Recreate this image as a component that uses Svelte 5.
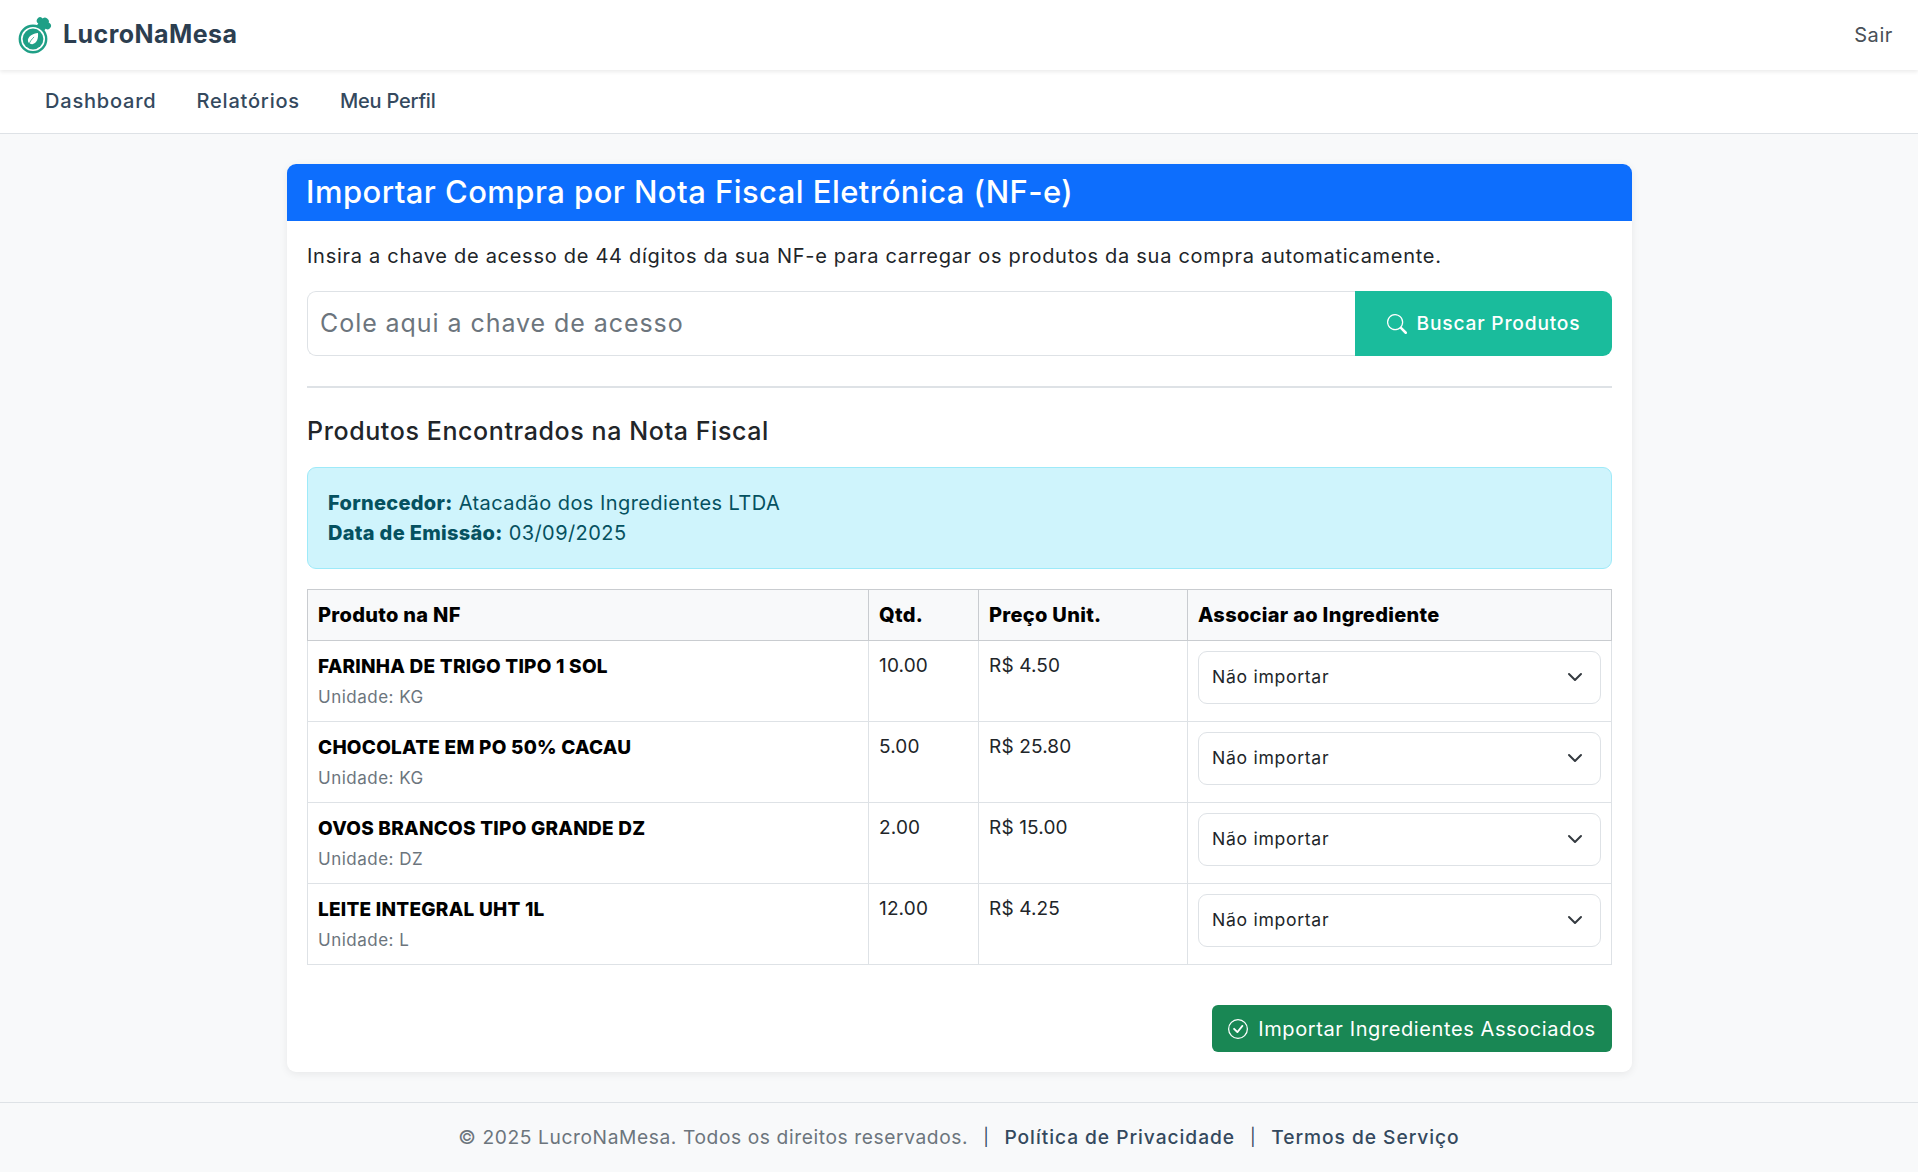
<script lang="ts">
  const produtos = [
    { nome: 'FARINHA DE TRIGO TIPO 1 SOL', unidade: 'KG', qtd: '10.00', preco: 'R$ 4.50' },
    { nome: 'CHOCOLATE EM PO 50% CACAU', unidade: 'KG', qtd: '5.00', preco: 'R$ 25.80' },
    { nome: 'OVOS BRANCOS TIPO GRANDE DZ', unidade: 'DZ', qtd: '2.00', preco: 'R$ 15.00' },
    { nome: 'LEITE INTEGRAL UHT 1L', unidade: 'L', qtd: '12.00', preco: 'R$ 4.25' }
  ]
</script>

<header class="topbar">
  <a class="brand" href="#top">
    <svg class="logo" viewBox="0 0 34 42" width="34" height="42" aria-hidden="true">
      <circle cx="15" cy="25" r="13.200" fill="none" stroke="#1f9f86" stroke-width="2.400" />
      <circle cx="15" cy="25" r="10.400" fill="#1f9f86" />
      <path d="M20 19c.5 5.500-1 9.800-5.600 11.200-2.700.2-4.700-1.400-4.500-4.100.3-4 4.900-6.500 10.100-7.100z" fill="#fff" />
      <path d="M10.500 31.500c1.200-3.600 3-6.300 5.600-8.500" fill="none" stroke="#1f9f86" stroke-width=".8" />
      <g transform="translate(-1 1.500) rotate(35 26 9)" fill="#1f9f86">
        <circle cx="21.500" cy="7.500" r="3.400" />
        <circle cx="26" cy="5.500" r="3.800" />
        <circle cx="30.500" cy="7.500" r="3.400" />
        <rect x="21.500" y="7.500" width="9" height="6" rx="1" />
      </g>
    </svg>
    <span>LucroNaMesa</span>
  </a>
  <a class="sair" href="#top">Sair</a>
</header>

<nav class="mainnav">
  <a href="#top">Dashboard</a>
  <a href="#top">Relatórios</a>
  <a href="#top">Meu Perfil</a>
</nav>

<main class="page">
  <section class="card">
    <h1 class="card-title">Importar Compra por Nota Fiscal Eletrónica (NF-e)</h1>
    <div class="card-body">
      <p class="intro">Insira a chave de acesso de 44 dígitos da sua NF-e para carregar os produtos da sua compra automaticamente.</p>

      <div class="search">
        <input type="text" placeholder="Cole aqui a chave de acesso" />
        <button type="button" class="btn-search">
          <svg viewBox="0 0 16 16" width="20" height="20" fill="currentColor" aria-hidden="true">
            <path d="M11.742 10.344a6.500 6.500 0 1 0-1.397 1.398h-.001c.03.04.062.078.098.115l3.850 3.850a1 1 0 0 0 1.415-1.414l-3.850-3.850a1.007 1.007 0 0 0-.115-.100zM12 6.500a5.500 5.500 0 1 1-11 0 5.500 5.500 0 0 1 11 0z" />
          </svg>
          Buscar Produtos
        </button>
      </div>

      <hr />

      <h2>Produtos Encontrados na Nota Fiscal</h2>

      <div class="alert">
        <div><strong>Fornecedor:</strong> Atacadão dos Ingredientes LTDA</div>
        <div><strong>Data de Emissão:</strong> 03/09/2025</div>
      </div>

      <table>
        <colgroup>
          <col class="c-prod" />
          <col class="c-qtd" />
          <col class="c-preco" />
          <col />
        </colgroup>
        <thead>
          <tr>
            <th>Produto na NF</th>
            <th>Qtd.</th>
            <th>Preço Unit.</th>
            <th>Associar ao Ingrediente</th>
          </tr>
        </thead>
        <tbody>
          {#each produtos as p}
            <tr>
              <td class="text">
                <div class="nome">{p.nome}</div>
                <div class="unidade">Unidade: {p.unidade}</div>
              </td>
              <td class="text">{p.qtd}</td>
              <td class="text">{p.preco}</td>
              <td>
                <div class="select-wrap">
                  <select>
                    <option>Não importar</option>
                  </select>
                  <svg viewBox="0 0 16 16" width="16" height="16" aria-hidden="true">
                    <path d="m2 5 6 6 6-6" fill="none" stroke="#343a40" stroke-width="2" stroke-linecap="round" stroke-linejoin="round" />
                  </svg>
                </div>
              </td>
            </tr>
          {/each}
        </tbody>
      </table>

      <div class="actions">
        <button type="button" class="btn-import">
          <svg viewBox="0 0 16 16" width="20" height="20" fill="currentColor" aria-hidden="true">
            <path d="M8 15A7 7 0 1 1 8 1a7 7 0 0 1 0 14zm0 1A8 8 0 1 0 8 0a8 8 0 0 0 0 16z" />
            <path d="M10.970 4.970a.235.235 0 0 0-.020.022L7.477 9.417 5.384 7.323a.750.750 0 0 0-1.060 1.060L6.970 11.030a.750.750 0 0 0 1.079-.020l3.992-4.990a.750.750 0 0 0-1.071-1.050z" />
          </svg>
          Importar Ingredientes Associados
        </button>
      </div>
    </div>
  </section>
</main>

<footer class="foot">
  <span>© 2025 LucroNaMesa. Todos os direitos reservados.</span>
  <span class="sep">|</span>
  <a href="#top">Política de Privacidade</a>
  <span class="sep">|</span>
  <a href="#top">Termos de Serviço</a>
</footer>

<style>
  :global(body) {
    margin: 0;
    background: #f8f9fa;
    color: #212529;
    font-family: Inter, 'Liberation Sans', sans-serif;
    font-size: 19px;
    line-height: 1.5;
  }

  a {
    text-decoration: none;
    color: inherit;
  }

  .topbar {
    height: 70px;
    display: flex;
    align-items: center;
    justify-content: space-between;
    padding: 0 25px 0 18px;
    background: #fff;
    box-shadow: 0 2px 4px rgba(0, 0, 0, 0.08);
    position: relative;
  }

  .brand {
    display: flex;
    align-items: center;
    gap: 11px;
    font-size: 25px;
    font-weight: 700;
    color: #2c3e50;
    letter-spacing: 0.45px;
  }

  .sair {
    font-size: 20px;
    letter-spacing: 0.6px;
    color: #495057;
  }

  .mainnav {
    height: 64px;
    padding-bottom: 2px;
    box-sizing: border-box;
    display: flex;
    align-items: center;
    gap: 40px;
    padding-left: 45px;
    background: #fff;
    border-bottom: 1px solid #dee2e6;
    font-size: 20px;
    letter-spacing: 0.8px;
    font-weight: 500;
    color: #34495e;
  }

  .mainnav a:last-child {
    letter-spacing: -0.2px;
  }

  .page {
    padding: 30px 0;
  }

  .card {
    width: 1345px;
    margin: 0 auto;
    background: #fff;
    border-radius: 9px;
    box-shadow: 0 2px 8px rgba(0, 0, 0, 0.07);
    overflow: hidden;
  }

  .card-title {
    margin: 0;
    height: 57px;
    padding: 0 19.500px;
    display: flex;
    align-items: center;
    background: #0d6efd;
    color: #fff;
    font-size: 31px;
    letter-spacing: 0.45px;
    font-weight: 500;
  }

  .card-body {
    padding: 21px 19.500px 20px 20.500px;
  }

  .intro {
    margin: 0 0 20px;
    font-size: 20px;
    letter-spacing: 0.72px;
    line-height: 29px;
  }

  .search {
    display: flex;
    height: 65px;
  }

  .search input {
    flex: 1;
    min-width: 0;
    padding: 0 12px;
    border: 1px solid #dee2e6;
    border-right: 0;
    border-radius: 9px 0 0 9px;
    font: inherit;
    font-size: 25px;
    letter-spacing: 0.94px;
    color: #212529;
    outline: none;
  }

  .search input::placeholder {
    color: #6c757d;
    opacity: 1;
  }

  .btn-search {
    width: 257px;
    display: flex;
    align-items: center;
    justify-content: center;
    gap: 10px;
    border: 0;
    border-radius: 0 9px 9px 0;
    background: #1abc9c;
    color: #fff;
    font: inherit;
    font-size: 19.200px;
    letter-spacing: 0.8px;
    font-weight: 500;
  }

  hr {
    margin: 30px 0 28px;
    border: 0;
    border-top: 2px solid #dee2e6;
  }

  h2 {
    margin: 0 0 21px;
    font-size: 25px;
    letter-spacing: 0.6px;
    font-weight: 500;
    line-height: 30px;
  }

  .alert {
    padding: 20px;
    border: 1px solid #9eeaf9;
    border-radius: 9px;
    background: #cff4fc;
    color: #055160;
    font-size: 20px;
    letter-spacing: 0.43px;
    line-height: 30px;
    margin-bottom: 20px;
  }

  .alert strong {
    font-weight: 800;
    letter-spacing: 0.3px;
  }

  table {
    width: 100%;
    border-collapse: collapse;
    table-layout: fixed;
    margin-bottom: 40px;
  }

  .c-prod {
    width: 561px;
  }

  .c-qtd {
    width: 110px;
  }

  .c-preco {
    width: 209px;
  }

  th,
  td {
    border: 1px solid #dee2e6;
    padding: 10px;
    vertical-align: top;
    text-align: left;
  }

  th {
    background: #f8f9fa;
    border-color: #c9ccd0;
    font-size: 20px;
    letter-spacing: 0.3px;
    font-weight: 800;
    color: #000;
    line-height: 30px;
  }

  td {
    height: 60px;
    color: #212529;
    letter-spacing: 0.15px;
  }

  td.text {
    padding: 11px 10px 9px;
  }

  .nome {
    font-weight: 800;
    color: #000;
    line-height: 30px;
    letter-spacing: 0.25px;
  }

  .unidade {
    font-size: 17px;
    letter-spacing: 0.5px;
    color: #6c757d;
    line-height: 30px;
  }

  .select-wrap {
    position: relative;
  }

  .select-wrap svg {
    position: absolute;
    right: 18px;
    top: 18px;
    pointer-events: none;
  }

  select {
    appearance: none;
    width: 100%;
    height: 53px;
    padding: 0 13px;
    border: 1px solid #dee2e6;
    border-radius: 9px;
    background: #fff;
    font: inherit;
    font-size: 17.600px;
    letter-spacing: 0.7px;
    color: #212529;
  }

  .actions {
    display: flex;
    justify-content: flex-end;
  }

  .btn-import {
    width: 400px;
    height: 47px;
    display: flex;
    align-items: center;
    justify-content: center;
    gap: 10px;
    border: 0;
    border-radius: 6px;
    background: #198754;
    color: #fff;
    font: inherit;
    font-size: 20px;
    letter-spacing: 0.6px;
  }

  .foot {
    border-top: 1px solid #dee2e6;
    height: 69px;
    display: flex;
    align-items: center;
    justify-content: center;
    gap: 15px;
    color: #6c757d;
    font-size: 19.200px;
    letter-spacing: 0.6px;
  }

  .foot a {
    color: #34495e;
    font-weight: 500;
    letter-spacing: 0.95px;
  }

  .sep {
    color: #34495e;
    font-size: 17px;
  }
</style>
